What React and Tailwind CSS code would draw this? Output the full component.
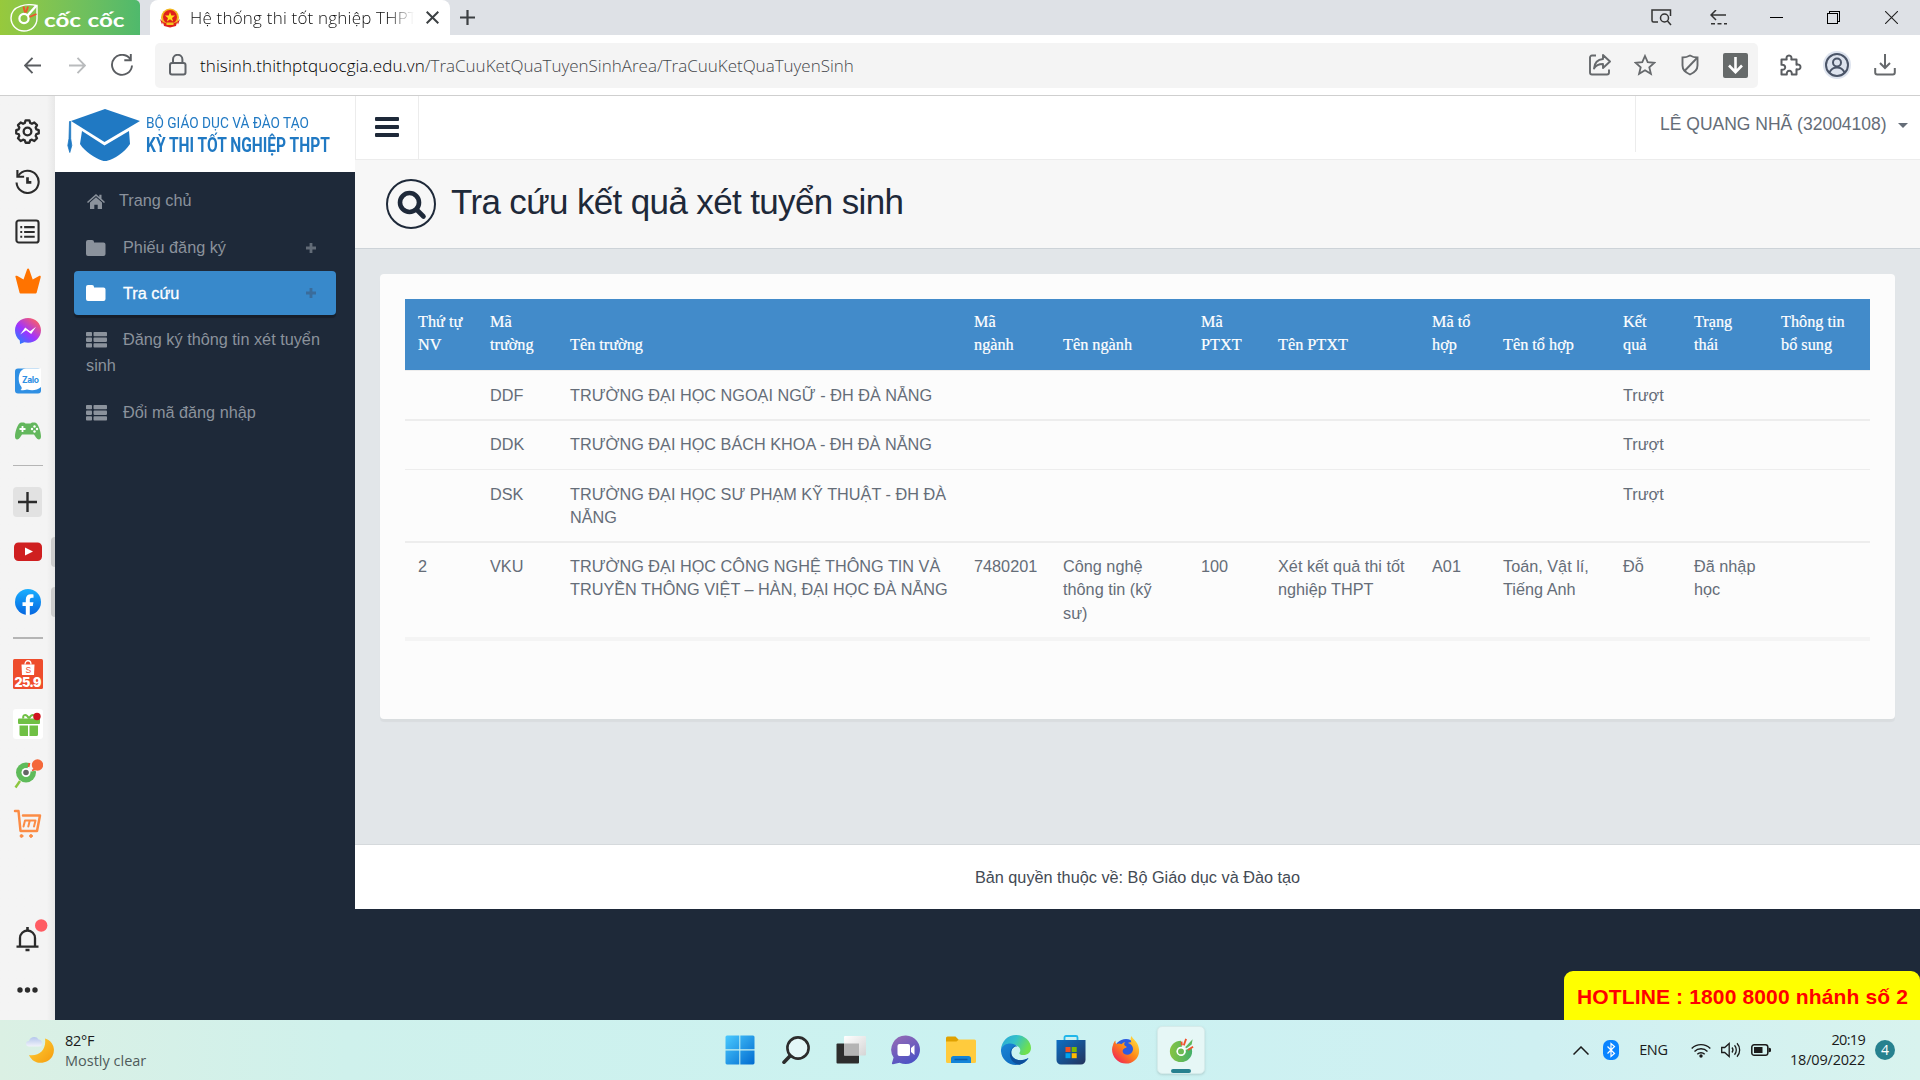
import React from "react";

const SANS = "font-['Liberation_Sans',Arial,sans-serif]";

/* ---------- small drawings ---------- */

function CocCocMark({ size, white = false }) {
  return (
    <svg className="shrink-0" width={size} height={size} viewBox="0 0 28 28" fill="none">
      <defs>
        <linearGradient id="ccg" x1="0" y1="14" x2="28" y2="14" gradientUnits="userSpaceOnUse">
          <stop stopColor="#8cc63f" />
          <stop offset="1" stopColor="#3fae6d" />
        </linearGradient>
      </defs>
      {white ? (
        <>
          <path d="M26.500 1.500C18 -.5 1 1 1 14c0 7.200 5.800 13 13 13s13-5.400 13-12.500V1.500z" stroke="#fff" strokeWidth="1.400" />
          <circle cx="14" cy="14.500" r="4.600" stroke="#fff" strokeWidth="2.200" />
          <path d="M17.500 11.500l9-10" stroke="#fff" strokeWidth="2.400" />
          <path d="M13.500 2.500l1.500 6M16 8.500l2-6M19.500 13l7-3" stroke="#f0532d" strokeWidth="1.900" />
        </>
      ) : (
        <>
          <path d="M14 4C7.500 4 2 9 2 15.500S7.500 27 14 27s12-5 12-11.500c0-1.500-.3-2.900-.8-4.200L19 14a5 5 0 1 1-4-3.500L14 4z" fill="url(#ccg)" />
          <circle cx="14" cy="15.500" r="4" fill="#6cbb52" stroke="#fff" strokeWidth="1.600" />
          <path d="M18.500 11L26.500 2.500l-1 5.500-5.500 4z" fill="#5cb85c" />
          <path d="M17 9l2.500-7M21.500 14l5.500-3.500M15 9l-.5-4" stroke="#f0532d" strokeWidth="2" />
        </>
      )}
    </svg>
  );
}

function TabStrip() {
  return (
    <div className="flex h-[35px] bg-[#dee1e6]">
      <div className="flex w-[140px] items-center rounded-tr-[5px] bg-gradient-to-r from-[#97c93c] to-[#4fb96c] pl-[10px]">
        <CocCocMark size={28} white />
        <svg className="ml-[6px]" width="84" height="29" viewBox="0 0 84 29" fill="#fff">
          <text x="0" y="24" fontFamily="Lato, sans-serif" fontWeight="700" fontSize="19" textLength="37" lengthAdjust="spacingAndGlyphs">cốc</text>
          <text x="43.500" y="24" fontFamily="Lato, sans-serif" fontWeight="700" fontSize="19" textLength="37" lengthAdjust="spacingAndGlyphs">cốc</text>
        </svg>
      </div>
      <div className="ml-[10px] flex w-[300px] items-center rounded-t-[8px] bg-white pl-[10px]">
        <svg width="20" height="20" viewBox="0 0 20 20">
          <circle cx="10" cy="9.500" r="9" fill="#f3b61f" />
          <circle cx="10" cy="9" r="7" fill="#e0201b" />
          <path d="M10 4l1.300 3.600h3.700l-3 2.300 1.100 3.600-3.100-2.200-3.100 2.200L8 9.900 5 7.600h3.700z" fill="#ffe11a" />
          <path d="M0 11l3 3-1 2.500zM20 11l-3 3 1 2.500z" fill="#e0201b" />
          <path d="M3 14l4 1.500h6l4-1.500-1 4-6 1.500L4 18z" fill="#e0201b" />
          <path d="M6.500 14.500h7v2.500h-7z" fill="#f3c61f" />
        </svg>
        <div className="ml-[10px] w-[224px] overflow-hidden whitespace-nowrap font-['Open_Sans','Noto_Sans',sans-serif] text-[17px] font-light leading-[34px] tracking-[0.2px] text-[#111] [mask-image:linear-gradient(to_right,black_89%,transparent)]">
          Hệ thống thi tốt nghiệp THPT
        </div>
        <svg className="ml-[12px]" width="13" height="13" viewBox="0 0 13 13" stroke="#3c4043" strokeWidth="2">
          <path d="M.7.7l11.600 11.600M12.300.7L.7 12.300" />
        </svg>
      </div>
      <svg className="ml-[10px] mt-[10px]" width="15" height="15" viewBox="0 0 15 15" stroke="#3c4043" strokeWidth="2.200">
        <path d="M7.500 0v15M0 7.500h15" />
      </svg>
      <div className="ml-auto flex text-[#222]">
        <div className="grid w-[57.5px] place-items-center">
          <svg className="ml-px" width="21" height="17" viewBox="0 0 21 17" fill="none" stroke="#333" strokeWidth="1.500">
            <path d="M7 13H2.500A1.500 1.500 0 0 1 1 11.500V1h18.500v6" />
            <circle cx="13.500" cy="9" r="4" />
            <path d="M16.500 12l3.500 4" />
          </svg>
        </div>
        <div className="grid w-[57.5px] place-items-center">
          <svg width="17" height="15" viewBox="0 0 17 15" fill="none" stroke="#333" strokeWidth="1.500">
            <path d="M6 0L1 5l5 5M1 5h15" />
            <path d="M1 13.700h16" strokeDasharray="4 2.500" />
          </svg>
        </div>
        <div className="grid w-[57.5px] place-items-center"><div className="h-px w-[13px] bg-black" /></div>
        <div className="grid w-[57.5px] place-items-center">
          <svg width="13" height="13" viewBox="0 0 13 13" fill="none" stroke="#000" shapeRendering="crispEdges">
            <path d="M.5 2.500h10v10H.5zM2.500 2.500v-2h10v10h-2" />
          </svg>
        </div>
        <div className="grid w-[57.5px] place-items-center">
          <svg width="13" height="13" viewBox="0 0 13 13" stroke="#222" strokeWidth="1.100"><path d="M0 0l13 13M13 0L0 13" /></svg>
        </div>
      </div>
    </div>
  );
}

function Slot({ w = "w-[45px]", children }) {
  return <div className={"grid h-full shrink-0 place-items-center " + w}>{children}</div>;
}

function Toolbar() {
  return (
    <div className="flex h-[61px] items-center border-b border-[#cfcfcf] bg-white pr-[11px]">
      <svg className="ml-[24px]" width="17" height="17" viewBox="0 0 17 17" fill="none" stroke="#5a5d61" strokeWidth="1.900"><path d="M8.500.8L1 8.500l7.500 7.700M1 8.500h16" /></svg>
      <svg className="ml-[28px]" width="17" height="17" viewBox="0 0 17 17" fill="none" stroke="#b9bbbd" strokeWidth="1.900"><path d="M8.500.8L16 8.500l-7.500 7.700M16 8.500H0" /></svg>
      <svg className="ml-[25px]" width="22" height="22" viewBox="0 0 22 22" fill="none" stroke="#5a5d61" strokeWidth="1.900">
        <path d="M19.500 5.500A10 10 0 1 0 21 11.500" /><path d="M19.800 0v6.200h-6.500" />
      </svg>
      <div className="ml-[22px] flex h-[45px] w-[1603px] items-center rounded-[5px] bg-[#f4f4f4]">
        <svg className="ml-[14px]" width="18" height="22" viewBox="0 0 18 22" fill="none" stroke="#5f6368" strokeWidth="2">
          <rect x="1" y="9" width="15.500" height="11.500" rx="2" /><path d="M4 9V5.500a4.700 4.700 0 0 1 9.400 0V9" />
        </svg>
        <div className="ml-[13px] whitespace-nowrap pt-px font-['Open_Sans','Noto_Sans',sans-serif] text-[17px] font-light text-[#44474b]">
          <span className="tracking-[0.1px] text-black">thisinh.thithptquocgia.edu.vn</span><span className="tracking-[-0.01px]">/TraCuuKetQuaTuyenSinhArea/TraCuuKetQuaTuyenSinh</span>
        </div>
        <div className="ml-auto flex h-full">
          <Slot><svg className="mr-px" width="22" height="22" viewBox="0 0 22 22" fill="none" stroke="#66696c" strokeWidth="1.900" strokeLinejoin="round">
            <path d="M7 1.500H3a2 2 0 0 0-2 2v15a2 2 0 0 0 2 2h15a2 2 0 0 0 2-2v-3" />
            <path d="M14 1l7 6.500-7 6.500v-4c-4 0-7 1-9 4.500C5.500 9 8.500 5.500 14 5z" />
          </svg></Slot>
          <Slot><svg className="mr-px" width="22" height="22" viewBox="0 0 22 22" fill="none" stroke="#66696c" strokeWidth="1.800" strokeLinejoin="miter">
            <path d="M11 2l2.700 6.200 6.700.6-5.100 4.400 1.600 6.600L11 16.300l-5.900 3.500 1.600-6.600L1.600 8.800l6.700-.6z" />
          </svg></Slot>
          <Slot><svg className="mr-px" width="18" height="22" viewBox="0 0 18 22" fill="none" stroke="#66696c" strokeWidth="1.900">
            <path d="M9 1.500c2.500 1.500 5 2 7.500 2v8c0 4-3.500 7.300-7.500 9-4-1.700-7.500-5-7.500-9v-8c2.500 0 5-.5 7.500-2z" /><path d="M3 17.500L16 4" />
          </svg></Slot>
          <Slot><div className="grid size-[25px] place-items-center rounded-[2px] bg-[#666a6a]">
            <svg width="15" height="17" viewBox="0 0 15 17" fill="none" stroke="#fff" strokeWidth="2.600"><path d="M7.500 0v15M1 8.500l6.500 6.700L14 8.500" /></svg>
          </div></Slot>
        </div>
      </div>
      <div className="ml-auto flex h-full">
        <Slot><svg width="22" height="22" viewBox="0 0 22 22" fill="none" stroke="#5a5d61" strokeWidth="2" strokeLinejoin="round">
          <path d="M1.500 5.500h5.200c-.6-2.400.3-4 2.300-4s2.900 1.600 2.300 4h5.200v5.200c2.400-.6 4 .3 4 2.300s-1.600 2.900-4 2.300v5.200h-4.700c.2-2.500-.8-3.700-2.500-3.700s-2.700 1.200-2.500 3.700H1.500v-4.700c2.500.2 3.700-.8 3.700-2.500s-1.200-2.700-3.700-2.500z" />
        </svg></Slot>
        <Slot w="w-[48px]"><svg width="28" height="28" viewBox="0 0 28 28" fill="none" stroke="#4b5568" strokeWidth="2">
          <circle cx="14" cy="14" r="14" fill="#dde3ee" stroke="none" /><circle cx="14" cy="14" r="11" /><circle cx="14" cy="11.500" r="4" />
          <path d="M6.500 21.500c1.500-3.500 4.200-5 7.500-5s6 1.500 7.500 5" />
        </svg></Slot>
        <Slot w="w-[48px]"><svg width="22" height="22" viewBox="0 0 22 22" fill="none" stroke="#66696c" strokeWidth="2">
          <path d="M11 0v14M6 9l5 5 5-5M1.200 14v4.500a2 2 0 0 0 2 2h15.600a2 2 0 0 0 2-2V14" />
        </svg></Slot>
      </div>
    </div>
  );
}

/* ---------- browser side rail ---------- */

function RailItem({ h = "h-[50px]", children }) {
  return <div className={"flex w-full shrink-0 items-center pl-[15px] " + h}>{children}</div>;
}

function Rail() {
  return (
    <div className="flex w-[55px] shrink-0 flex-col bg-gradient-to-r from-[#f4f4f4] from-85% to-[#e8e8e8] pt-[10px]">
      <RailItem><svg width="25" height="25" viewBox="0 0 26 26" fill="none" stroke="#2b2b2b" strokeWidth="2.400" strokeLinejoin="round">
        <circle cx="13" cy="13" r="4" />
        <path d="M11 1.500h4l.8 2.700 1.800.8 2.500-1.400 2.800 2.800L21.500 9l.7 1.800 2.500.7v3.500l-2.500.8-.7 1.700 1.400 2.500-2.800 2.900-2.500-1.400-1.800.7-.8 2.500h-4l-.8-2.500-1.800-.7-2.500 1.400L3.100 20l1.400-2.500-.7-1.700-2.500-.8v-3.500l2.500-.7L4.500 9 3.100 6.400l2.800-2.800L8.400 5l1.800-.8z" />
      </svg></RailItem>
      <RailItem><svg width="25" height="25" viewBox="0 0 26 26" fill="none" stroke="#2b2b2b" strokeWidth="2.200">
        <path d="M3.500 7A11.500 11.500 0 1 1 1.600 14" /><path d="M2.500 1v7H9.500" /><path d="M13 8.500V14h4" strokeWidth="2.800" />
      </svg></RailItem>
      <RailItem><svg width="25" height="25" viewBox="0 0 26 26" fill="none" stroke="#2b2b2b" strokeWidth="2.200">
        <rect x="1.500" y="1.500" width="23" height="23" rx="2.500" /><path d="M9.500 8.500h11M9.500 13.500h11M9.500 18.500h11" /><path d="M5.500 8.500h2M5.500 13.500h2M5.500 18.500h2" />
      </svg></RailItem>
      <RailItem><svg width="26" height="26" viewBox="0 0 26 26" fill="#ff7300"><path d="M.5 9C0 7.500 1.500 7.500 2.500 8l6 3.500L12 1.500c.3-1.200 1.900-1.200 2.200 0l3.500 10L24 8c1-.5 2 0 1.700 1.200l-4 15.300c-.3.800-.6 1-1.500 1H6c-.9 0-1.300-.2-1.500-1z" /></svg></RailItem>
      <RailItem><svg width="26" height="26" viewBox="0 0 26 26">
        <defs><linearGradient id="msg" x1="0" y1="1" x2=".8" y2="0"><stop stopColor="#0a8dff" /><stop offset=".5" stopColor="#a033ff" /><stop offset="1" stopColor="#ff6060" /></linearGradient></defs>
        <path d="M13 0c7.300 0 13 5.300 13 12.300S20.300 24.800 13 24.800c-1.300 0-2.500-.2-3.700-.5L5 26l-.2-3.500C1.800 20.200 0 16.600 0 12.300 0 5.300 5.700 0 13 0z" fill="url(#msg)" />
        <path d="M5.200 16.500l5-7 4.800 3.800 6-4.500-4.800 7.200-5-3.800z" fill="#fff" />
      </svg></RailItem>
      <RailItem><svg width="26" height="26" viewBox="0 0 26 26">
        <rect y=".5" width="26" height="25" rx="3" fill="#2f8fe3" /><path d="M5.500 3.500C7 1.500 9 .5 11 .5h15v18.500c-4 3.500-9 4-14 2.500-2 .8-4.500 1-6.500.5 1.500-1 1.300-2 1-3C3 15 3 8 5.500 3.500z" fill="#fff" />
        <text x="7" y="14.500" fontFamily="Inter, sans-serif" fontWeight="700" fontSize="8.500" fill="#2f8fe3" textLength="17">Zalo</text>
      </svg></RailItem>
      <RailItem h="h-[49px]"><svg width="26" height="18" viewBox="0 0 26 18">
        <path d="M6 .5h3l1.500 1h5l1.500-1h3c3 .3 6 9 6 14 0 3.500-3 4-5 1l-2-3H7l-2 3c-2 3-5 2.500-5-1C0 9.500 3 .8 6 .5z" fill="#63b75d" />
        <path d="M7.500 4v6M4.500 7h6" stroke="#fff" strokeWidth="1.800" /><g fill="#fff"><circle cx="17" cy="7" r="1.200" /><circle cx="22" cy="7" r="1.200" /><circle cx="19.500" cy="4.500" r="1.200" /><circle cx="19.500" cy="9.500" r="1.200" /></g>
      </svg></RailItem>
      <div className="ml-[13px] mt-[10px] h-px w-[30px] bg-[#b5b5b5]" />
      <div className="ml-[13px] mt-[21px] grid h-[30px] w-[29px] shrink-0 place-items-center rounded-[4px] bg-[#e2e2e2]">
        <svg width="19" height="20" viewBox="0 0 19 20" stroke="#2b2b2b" strokeWidth="2.400"><path d="M9.500 0v20M0 10h19" /></svg>
      </div>
      <div className="mt-[20px] flex h-[30px] items-center">
        <svg className="ml-[14px]" width="28" height="20" viewBox="0 0 28 20"><rect y=".5" width="28" height="18.500" rx="4.500" fill="#cf1f20" /><path d="M11 5.500l8 4-8 4z" fill="#fff" /></svg>
        <div className="ml-auto h-[30px] w-[4px] rounded-l-[4px] bg-[#cccccc]" />
      </div>
      <div className="mt-[20px] flex h-[30px] items-center">
        <svg className="ml-[15px]" width="26" height="26" viewBox="0 0 26 26"><defs><linearGradient id="fbg" x1="0" y1="0" x2="0" y2="1"><stop stopColor="#19afff" /><stop offset="1" stopColor="#0566e0" /></linearGradient></defs>
          <circle cx="13" cy="13" r="13" fill="url(#fbg)" /><path d="M10.800 26v-9H7.500v-3.800h3.300V10.500c0-3.400 2-5.200 5-5.200 1.200 0 2.700.2 2.700.2v3.200H17c-1.700 0-2.200 1-2.200 2.100v2.400h3.600l-.6 3.800h-3v9z" fill="#fff" /></svg>
        <div className="ml-auto h-[30px] w-[4px] rounded-l-[4px] bg-[#cccccc]" />
      </div>
      <div className="ml-[13px] mt-[20px] h-[2px] w-[30px] shrink-0 bg-[#b5b5b5]" />
      <svg className="ml-[13px] mt-[20px] shrink-0" width="30" height="30" viewBox="0 0 30 30">
        <rect width="30" height="30" rx="1.500" fill="#ee4d2d" /><path d="M8.500 5.500h13L21 16H9z" fill="#fff" /><path d="M12 5.500c0-5 6-5 6 0" fill="none" stroke="#fff" strokeWidth="1.300" />
        <text x="12.500" y="14" fontFamily="Liberation Sans" fontSize="8.500" fill="#ee4d2d">S</text>
        <text x="1.500" y="28" fontFamily="Inter, sans-serif" fontWeight="900" fontSize="12.500" fill="#fff" textLength="27">25.9</text>
      </svg>
      <svg className="ml-[13px] mt-[20px] shrink-0" width="30" height="30" viewBox="0 0 30 30">
        <rect width="30" height="30" rx="3" fill="#fff" /><g fill="#6fc044"><rect x="5" y="9.500" width="22" height="5.500" rx="1" /><path d="M6.500 16.500h8.500V27H8a1.500 1.500 0 0 1-1.500-1.500zM16.500 16.500H25v9a1.500 1.500 0 0 1-1.500 1.500h-7z" /></g>
        <path d="M16 9.500C13 4 9 6 10.500 9.500M16 9.500c3-5.500 7-3.500 5.500 0" fill="none" stroke="#6fc044" strokeWidth="2" /><circle cx="24" cy="7.500" r="3.700" fill="#d0151f" />
      </svg>
      <svg className="ml-[13px] mt-[20px] shrink-0" width="30" height="30" viewBox="0 0 30 30">
        <path d="M2.500 28.500L7 22" stroke="#8cc63f" strokeWidth="2.400" />
        <circle cx="13" cy="13.500" r="10" fill="#5fbb5a" /><path d="M13 13.500L17 2l9 9z" fill="#f4f4f4" /><circle cx="13" cy="13.500" r="4.500" fill="#fff" /><circle cx="13" cy="13.500" r="2.800" fill="#666" />
        <path d="M15.500 8l1-4M19 11.500l4-1.500" stroke="#f0532d" strokeWidth="1.800" /><circle cx="24.500" cy="6" r="5.700" fill="#f4683a" />
      </svg>
      <svg className="ml-[13px] mt-[20px] shrink-0" width="30" height="30" viewBox="0 0 30 30" fill="none" stroke="#fb8c45" strokeWidth="2.500" strokeLinejoin="round" strokeLinecap="round">
        <path d="M2 2h3.500l2 20H24l3-15.500H10" /><path d="M10.500 17.500l1.500-6h10.500l-1.500 6M16.800 11.500l-1.500 6" strokeWidth="2" />
        <circle cx="8.500" cy="27" r="1.400" fill="#fb8c45" strokeWidth="1" /><circle cx="18" cy="27" r="1.400" fill="#fb8c45" strokeWidth="1" />
      </svg>
      <div className="mt-[80px] flex h-[34px] shrink-0">
        <svg className="ml-[16px] shrink-0" width="34" height="34" viewBox="0 0 34 34" fill="none" stroke="#2b2b2b" strokeWidth="2.300">
          <path d="M4 27.500V19a7.500 7.500 0 0 1 15 0v8.500M0.500 27.600h22" /><path d="M11.500 8v3.500M9.500 31h4" strokeWidth="2.600" /><circle cx="25.200" cy="6.500" r="6.200" fill="#ff5c63" stroke="none" />
        </svg>
      </div>
      <svg className="ml-[17px] mt-[34px] shrink-0" width="21" height="6" viewBox="0 0 21 6" fill="#2b2b2b"><circle cx="3" cy="3" r="2.700" /><circle cx="10.500" cy="3" r="2.700" /><circle cx="18" cy="3" r="2.700" /></svg>
    </div>
  );
}

/* ---------- site ---------- */

const FolderIcon = () => (
  <svg className="shrink-0" width="20" height="16" viewBox="0 0 20 16" fill="currentColor"><path d="M0 2a2 2 0 0 1 2-2h4a2 2 0 0 1 2 2v.5h9.500a2 2 0 0 1 2 2V14a2 2 0 0 1-2 2H2a2 2 0 0 1-2-2z" /></svg>
);
const ListIcon = () => (
  <svg className="mb-[2px] inline shrink-0" width="21" height="16" viewBox="0 0 21 16" fill="currentColor">
    {[0, 5.6, 11.2].map((y) => (
      <g key={y}><rect y={y} width="6" height="4.300" rx=".8" /><rect x="7.500" y={y} width="13.500" height="4.300" rx=".8" /></g>
    ))}
  </svg>
);
const PlusIcon = () => (
  <svg width="10" height="10" viewBox="0 0 10 10" stroke="currentColor" strokeWidth="2.800"><path d="M5 0v10M0 5h10" /></svg>
);

function SiteSidebar() {
  return (
    <aside className="flex w-[300px] shrink-0 flex-col bg-[#1e2939]">
      <div className="flex h-[76px] bg-white pl-[12px] pt-[12px]">
        <svg className="shrink-0" width="74" height="54" viewBox="0 0 74 54" fill="#2079c3">
          <path d="M38 1l35 12-35.500 21L4 13z" /><path d="M15 23l22.500 14.500L62 23l1 13c-6 9-16 15-22 16.500-2 .7-4 .7-6 0C28 50 18 44 13 36z" />
          <path d="M2.500 13.500h1.200v17l1.100 7-2 7-2-7 1.200-7z" stroke="#2079c3" strokeWidth=".8" />
        </svg>
        <div className="ml-[5px] w-[190px] whitespace-nowrap font-['Roboto',sans-serif] text-[#2079c3]">
          <div className="mt-[5px] text-[15px] leading-[20px]"><span className="inline-block origin-left scale-x-[0.911]">BỘ GIÁO DỤC VÀ ĐÀO TẠO</span></div>
          <div className="mt-px text-[19.500px] font-bold leading-[24px]"><span className="inline-block origin-left scale-x-[0.797]">KỲ THI TỐT NGHIỆP THPT</span></div>
        </div>
      </div>
      <nav className="flex flex-col px-[19px] pt-[5px] text-[16.250px] text-[#8b929c]">
        <div className="mb-px flex h-[46px] items-center pl-[13px]">
          <svg className="mt-[3px]" width="18" height="15" viewBox="0 0 18 15" fill="currentColor"><path d="M9 3.200l6 5.200V15h-4.300v-4.300H7.300V15H3V8.400z" /><path d="M9 0l3.300 2.900V.8h2.200v4L18 7.900l-1 1.100L9 2 1 9 0 7.900z" /></svg>
          <span className="ml-[14px]">Trang chủ</span>
        </div>
        <div className="flex h-[47px] items-center pl-[12px] pr-[20px]">
          <FolderIcon /><span className="ml-[17px]">Phiếu đăng ký</span><span className="ml-auto text-[#626b77]"><PlusIcon /></span>
        </div>
        <div className="flex h-[44px] items-center rounded-[4px] bg-[#3889cb] pl-[12px] pr-[20px] text-white shadow-[0_3px_1px_rgba(0,0,0,0.25)]">
          <FolderIcon /><span className="ml-[17px] [-webkit-text-stroke:0.3px_white]">Tra cứu</span><span className="ml-auto text-[#3a6c9b]"><PlusIcon /></span>
        </div>
        <div className="mt-[11px] pl-[12px] leading-[26px]">
          <ListIcon /><span className="ml-[16px]">Đăng ký thông tin xét tuyển</span><br />sinh
        </div>
        <div className="mt-[21px] pl-[12px] leading-[26px]">
          <ListIcon /><span className="ml-[16px]">Đổi mã đăng nhập</span>
        </div>
      </nav>
    </aside>
  );
}

const HEADERS = [
  ["Thứ tự", "NV"], ["Mã", "trường"], ["", "Tên trường"], ["Mã", "ngành"], ["", "Tên ngành"], ["Mã", "PTXT"],
  ["", "Tên PTXT"], ["Mã tổ", "hợp"], ["", "Tên tổ hợp"], ["Kết", "quả"], ["Trạng", "thái"], ["Thông tin", "bổ sung"],
];

const ROWS = [
  { cls: "h-[50px] border-b-2 border-[#ededed] pt-[12.500px]", cells: { 1: ["DDF"], 2: ["TRƯỜNG ĐẠI HỌC NGOẠI NGỮ - ĐH ĐÀ NẴNG"], 9: ["Trượt"] } },
  { cls: "h-[49px] border-b border-[#ededed] pt-[12px]", cells: { 1: ["DDK"], 2: ["TRƯỜNG ĐẠI HỌC BÁCH KHOA - ĐH ĐÀ NẴNG"], 9: ["Trượt"] } },
  { cls: "h-[73px] border-b-2 border-[#ededed] pt-[12.500px]", cells: { 1: ["DSK"], 2: ["TRƯỜNG ĐẠI HỌC SƯ PHẠM KỸ THUẬT - ĐH ĐÀ", "NẴNG"], 9: ["Trượt"] } },
  {
    cls: "h-[98px] border-b-4 border-[#f4f4f4] pt-[12px] leading-[23.400px]",
    cells: {
      0: ["2"], 1: ["VKU"], 2: ["TRƯỜNG ĐẠI HỌC CÔNG NGHỆ THÔNG TIN VÀ", "TRUYỀN THÔNG VIỆT – HÀN, ĐẠI HỌC ĐÀ NẴNG"], 3: ["7480201"],
      4: ["Công nghệ", "thông tin (kỹ", "sư)"], 5: ["100"], 6: ["Xét kết quả thi tốt", "nghiệp THPT"], 7: ["A01"], 8: ["Toán, Vật lí,", "Tiếng Anh"],
      9: ["Đỗ"], 10: ["Đã nhập", "học"],
    },
  },
];

const COLS = "grid pl-px grid-cols-[72px_80px_404px_89px_138px_77px_154px_71px_120px_71px_87px_101px]";

function ResultTable() {
  return (
    <div className="w-[1465px] text-[16.250px] leading-[23.200px] text-[#656d78]">
      <div className={COLS + " h-[72px] items-end border-b border-[#ededed] bg-[#428bca] bg-clip-padding pb-[12.500px] font-['Liberation_Serif','Times_New_Roman',serif] text-white [-webkit-text-stroke:0.2px_white]"}>
        {HEADERS.map(([a, b], i) => (
          <div key={i} className="whitespace-nowrap pl-[12px]">
            {a && <div>{a}</div>}
            <div>{b}</div>
          </div>
        ))}
      </div>
      {ROWS.map((row, r) => (
        <div key={r} className={COLS + " " + row.cls}>
          {HEADERS.map((_, c) => (
            <div key={c} className="whitespace-nowrap pl-[12px]">
              {(row.cells[c] || []).map((t) => <div key={t}>{t}</div>)}
            </div>
          ))}
        </div>
      ))}
    </div>
  );
}

function Site() {
  return (
    <main className="flex min-w-0 flex-1 flex-col bg-[#1e2939]">
      <header className="flex h-[64px] shrink-0 border-b border-[#ececec] bg-white">
        <div className="flex w-[64px] flex-col gap-[4px] border-x border-[#ececec] pl-[19px] pt-[21px]">
          <div className="h-[4px] w-[24px] rounded-[1px] bg-[#1e2939]" /><div className="h-[4px] w-[24px] rounded-[1px] bg-[#1e2939]" /><div className="h-[4px] w-[24px] rounded-[1px] bg-[#1e2939]" />
        </div>
        <div className="ml-auto flex h-[56px] w-[285px] items-center border-l border-[#ececec] pl-[24px] text-[#656d78]">
          <span className="whitespace-nowrap text-[17.500px]">LÊ QUANG NHÃ (32004108)</span>
          <svg className="ml-[11px] mt-[3px]" width="10" height="5" viewBox="0 0 10 5" fill="#656d78"><path d="M0 0h10L5 5z" /></svg>
        </div>
      </header>
      <div className="flex h-[89px] shrink-0 items-center border-b border-[#cdd3d8] bg-[#f7f7f7] pl-[31px]">
        <svg width="50" height="50" viewBox="0 0 50 50" fill="none" stroke="#1e2939"><circle cx="25" cy="25" r="24" strokeWidth="2" /><circle cx="23.500" cy="23.500" r="9.500" strokeWidth="4.600" /><path d="M30.500 30.500l7 7" strokeWidth="4.600" strokeLinecap="round" /></svg>
        <h1 className="mb-[5px] ml-[15px] text-[35px] leading-[44px] tracking-[-0.640px] text-[#1e2939]">Tra cứu kết quả xét tuyển sinh</h1>
      </div>
      <section className="h-[595px] shrink-0 bg-[#e2e6e9] pl-[25px] pt-[25px]">
        <div className="h-[445px] w-[1515px] rounded-[4px] bg-[#fcfcfc] pl-[25px] pt-[25px] shadow-[0_3px_1px_rgba(0,0,0,0.04)]"><ResultTable /></div>
      </section>
      <footer className="grid h-[65px] shrink-0 place-items-center border-t border-[#d5d9dc] bg-white text-[16.250px] text-[#434a54]">Bản quyền thuộc về: Bộ Giáo dục và Đào tạo</footer>
      <div className="ml-auto mt-auto flex h-[49px] w-[356px] shrink-0 items-center rounded-t-[9px] bg-[#ffff00] pl-[13px] pt-[2px] text-[21px] font-bold tracking-[0.140px] text-[#ff0000]"><span className="whitespace-nowrap">HOTLINE : 1800 8000 nhánh số 2</span></div>
    </main>
  );
}

/* ---------- taskbar ---------- */

function TaskIcon({ children }) {
  return <div className="grid h-[60px] w-[55px] shrink-0 place-items-center">{children}</div>;
}

function Taskbar() {
  return (
    <div className="flex h-[60px] items-center bg-[linear-gradient(to_right,#dbf0e4,#cff1ec_18%,#cbf2f1_50%,#cff0f2_80%,#d8f3ee)] font-['Open_Sans','Noto_Sans',sans-serif] text-[#1b1b1b]">
      <div className="flex w-[713px] items-center pl-[25px]">
        <svg width="30" height="30" viewBox="0 0 30 30">
          <defs><linearGradient id="moon" x1="0" y1="0" x2="1" y2="1"><stop stopColor="#ffd43b" /><stop offset="1" stopColor="#f59a0c" /></linearGradient><linearGradient id="cl" x1="0" y1="0" x2="0" y2="1"><stop stopColor="#b4c6ec" /><stop offset="1" stopColor="#f1f3fb" /></linearGradient></defs>
          <path d="M20 3.500c8 2.500 11 10.500 7.500 17.500-4 8-18.500 10.500-23.500-1 11 1.500 17.500-6 16-16.500z" fill="url(#moon)" />
          <path d="M4 11.500c-4 0-4-5.500 0-5.500C5 1.500 11.500.500 13.500 4.500c4 0 5.500 7 .5 7z" fill="url(#cl)" />
        </svg>
        <div className="ml-[10px] pt-[2px] text-[14.500px] leading-[20px]">
          <div className="tracking-[-0.3px]">82°F</div>
          <div className="text-[#4f5b5b]">Mostly clear</div>
        </div>
      </div>
      <TaskIcon><svg className="mr-px" width="30" height="30" viewBox="0 0 30 30"><defs><linearGradient id="win" x1="0" y1="0" x2="30" y2="30" gradientUnits="userSpaceOnUse"><stop stopColor="#4bcbff" /><stop offset="1" stopColor="#0069cf" /></linearGradient></defs><path d="M.5 2A1.500 1.500 0 0 1 2 .5h12.300v13.800H.5zM15.300.5H28A1.500 1.500 0 0 1 29.500 2v12.300H15.300zM.5 15.400h13.800v14H2A1.500 1.500 0 0 1 .5 28zM15.300 15.400h14.200V28a1.500 1.500 0 0 1-1.500 1.400H15.300z" fill="url(#win)" /></svg></TaskIcon>
      <TaskIcon><svg width="28" height="28" viewBox="0 0 28 28" fill="none" stroke="#2c2c2c" strokeLinecap="round"><circle cx="16" cy="12" r="10.600" strokeWidth="2.600" fill="#e3f7f8" /><path d="M8 20l-6 6.200" strokeWidth="3.600" /></svg></TaskIcon>
      <TaskIcon><svg width="30" height="30" viewBox="0 0 30 30"><defs><linearGradient id="tv" x1="0" y1="0" x2="1" y2="1"><stop stopColor="#fff" /><stop offset="1" stopColor="#d5d5d5" /></linearGradient></defs><rect x=".5" y="8.500" width="22.500" height="20" rx="1" fill="#2d2d2d" /><rect x="8" y="1" width="22" height="19.500" rx="1" fill="url(#tv)" /><rect x="8" y="8.500" width="15" height="12" fill="#b4b4b4" /></svg></TaskIcon>
      <TaskIcon><svg width="30" height="30" viewBox="0 0 30 30"><defs><linearGradient id="chat" x1="0" y1="0" x2=".5" y2="1"><stop stopColor="#9a6cb4" /><stop offset="1" stopColor="#4f53c4" /></linearGradient></defs><path d="M15 .5a14.300 14.300 0 1 1-6.500 27.200L2 29.300c-.8.2-1.300-.5-1-1.200l1.600-5.500A14.300 14.300 0 0 1 15 .5z" fill="url(#chat)" /><rect x="6.500" y="9" width="12.500" height="12" rx="2" fill="#fff" /><path d="M20 13l3.500-3v10L20 17z" fill="#fff" /></svg></TaskIcon>
      <TaskIcon><svg width="30" height="28" viewBox="0 0 30 28"><path d="M0 2a1.500 1.500 0 0 1 1.500-1.500h8L13 4v4H0z" fill="#e0a100" /><path d="M0 5.500h10.500L13 3.500h15.500A1.500 1.500 0 0 1 30 5v20.500a1.500 1.500 0 0 1-1.500 1.500h-27A1.500 1.500 0 0 1 0 25.500z" fill="#ffcb3d" /><path d="M5 27v-4.500a2.500 2.500 0 0 1 2.500-2.500h15a2.500 2.500 0 0 1 2.500 2.500V27z" fill="#1484d8" /><path d="M8.500 23.500h13" stroke="#0b5cab" strokeWidth="1.500" /></svg></TaskIcon>
      <TaskIcon><svg width="30" height="30" viewBox="0 0 30 30"><defs><linearGradient id="e1" x1="0" y1="0" x2="1" y2=".4"><stop stopColor="#2aa5d9" /><stop offset=".5" stopColor="#33c1c9" /><stop offset="1" stopColor="#6fe04e" /></linearGradient><linearGradient id="e2" x1="0" y1="0" x2="1" y2="1"><stop stopColor="#1b86d6" /><stop offset="1" stopColor="#0a62b8" /></linearGradient></defs>
        <path d="M0 14.500C.5 6 7 0 15 0c9 0 15 6.500 15 13 0 4.500-3.500 7-7.500 7-3.500 0-4.500-1.300-4-2.300 1.500-2 1-5.500-2.500-7-5-2-13-1.500-16 3.800z" fill="url(#e1)" />
        <path d="M0 14.500C2 8 12 6.500 16.500 11.500 12 11 9.500 15 10.500 19.500c1.500 5 8.500 8 17 3.500C25 27 20.500 30 15 30 6.500 30-.5 23 0 14.500z" fill="url(#e2)" /><path d="M16 11c-4.500.5-6.500 4.500-5.500 8.500 1.500 5 8.500 8 17 3.500-2.500 4-5.500 5.700-9 6.700C8 28.500 6 16 13 11.500z" fill="#0d4f9c" /></svg></TaskIcon>
      <TaskIcon><svg width="30" height="30" viewBox="0 0 30 30"><defs><linearGradient id="st" x1="0" y1="0" x2="1" y2="1"><stop stopColor="#0c6fc4" /><stop offset="1" stopColor="#24335c" /></linearGradient></defs><path d="M8.500 6V2.500A1.500 1.500 0 0 1 10 1h10a1.500 1.500 0 0 1 1.500 1.500V6" fill="none" stroke="#21b7ea" strokeWidth="1.800" /><path d="M.5 5h29v20a4.500 4.500 0 0 1-4.500 4.500H5A4.500 4.500 0 0 1 .5 25z" fill="url(#st)" /><path d="M9.500 12h5v5h-5z" fill="#f25022" /><path d="M15.700 12h5v5h-5z" fill="#7fba00" /><path d="M9.500 18.200h5v5h-5z" fill="#00a4ef" /><path d="M15.700 18.200h5v5h-5z" fill="#ffb900" /></svg></TaskIcon>
      <TaskIcon><svg width="28" height="28" viewBox="0 0 28 28"><defs><linearGradient id="ff" x1="1" y1="0" x2=".1" y2="1"><stop stopColor="#fff14a" /><stop offset=".5" stopColor="#ff8a16" /><stop offset="1" stopColor="#f0175c" /></linearGradient></defs><circle cx="14" cy="15" r="12" fill="#2b5be0" /><path d="M3.500 4.500c0 2 0 2.500.8 3.500 2-.8 4-.7 5 .2 2-1.500 3-2 4-2.200-1.500 1.500-1.500 3 0 4 1.500.5 2 1 0 2-2 .8-3 2-2.500 4 1 3 5.500 3.500 8 1.500 3-2.500 2.500-6 1-8-1-1.500-3-2.300-4-2.500 1.500-1 3-1 3.500-.7C18.500 4.500 18.300 2 19.500 0c1 3 4.500 4.500 6 8 5 11-2.500 19.500-11.500 19.500C4 27.500-2.500 17 1 9c.3-1.800 1.300-3.500 2.500-4.500z" fill="url(#ff)" /></svg></TaskIcon>
      <div className="ml-[4px] flex h-[48px] w-[48px] flex-col items-center rounded-[5px] border border-[#d5ebea] bg-[#e6f7f6] pt-[10px] shadow-sm">
        <CocCocMark size={26} />
        <div className="mt-auto h-[4px] w-[20px] rounded-[2px] bg-[#27818f]" />
      </div>
      <div className="ml-auto flex h-full items-center pr-[25px]">
        <svg width="16" height="9" viewBox="0 0 16 9" fill="none" stroke="#1b1b1b" strokeWidth="1.500"><path d="M.5 8.500L8 1l7.500 7.500" /></svg>
        <svg className="ml-[14px]" width="16" height="20" viewBox="0 0 16 20"><rect width="16" height="20" rx="6.500" fill="#0a84ff" /><path d="M4.500 6.500l7 7L8 16.500v-13l3.500 3-7 7" fill="none" stroke="#fff" strokeWidth="1.200" /></svg>
        <span className="ml-[20.500px] text-[14.500px] tracking-[-0.4px]">ENG</span>
        <svg className="ml-[23px]" width="20" height="15" viewBox="0 0 20 15" fill="none" stroke="#1b1b1b" strokeWidth="1.400"><path d="M.7 5.500a13 13 0 0 1 18.600 0M3.500 8.500a9.200 9.200 0 0 1 13 0M6.300 11.300a5.200 5.200 0 0 1 7.400 0" /><circle cx="10" cy="13" r="1.700" fill="#1b1b1b" stroke="none" /></svg>
        <svg className="ml-[10px]" width="20" height="16" viewBox="0 0 20 16" fill="none" stroke="#1b1b1b" strokeWidth="1.300"><path d="M.7 5.500v5h3l4.500 4V1.500l-4.500 4zM11 5.500a4 4 0 0 1 0 5M13.500 3.300a7 7 0 0 1 0 9.400M16 1.200a10 10 0 0 1 0 13.600" /></svg>
        <svg className="ml-[10px]" width="20" height="12" viewBox="0 0 20 12"><rect x=".8" y=".8" width="16" height="10.400" rx="2.300" fill="none" stroke="#1b1b1b" strokeWidth="1.500" /><rect x="3" y="3" width="8.500" height="6" fill="#1b1b1b" /><path d="M17.500 3.500l2.500 1v3l-2.500 1z" fill="#1b1b1b" /></svg>
        <div className="ml-[19.500px] text-right text-[14.500px] leading-[20px]"><div className="tracking-[-0.7px]">20:19</div><div className="tracking-[-0.2px]">18/09/2022</div></div>
        <div className="ml-[10px] grid size-[20px] place-items-center rounded-full bg-[#27818f] text-[14px] leading-none text-white">4</div>
      </div>
    </div>
  );
}

export default function App() {
  return (
    <div className={"flex h-[1080px] w-[1920px] flex-col overflow-hidden " + SANS}>
      <TabStrip />
      <Toolbar />
      <div className="flex h-[924px] shrink-0"><Rail /><SiteSidebar /><Site /></div>
      <Taskbar />
    </div>
  );
}
